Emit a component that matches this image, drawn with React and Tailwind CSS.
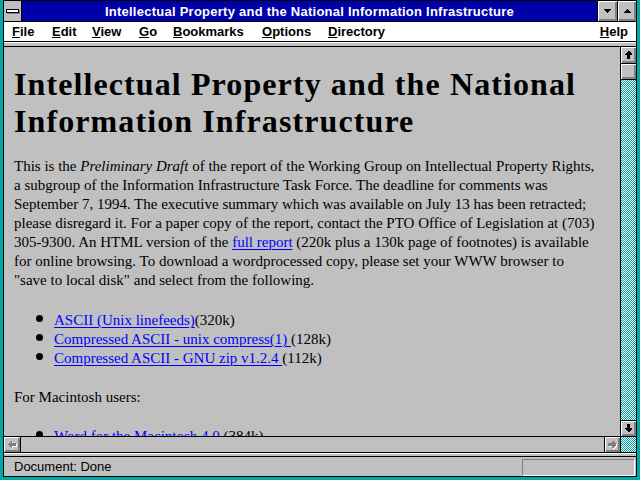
const face =
  'bg-[#c0c0c0] shadow-[inset_1px_1px_0_#ffffff,inset_-1px_-1px_0_#808080,inset_-2px_-2px_0_#808080]'

const ARROWS = {
  up: '3,0 4,0 7,3 7,4 5,4 5,8 2,8 2,4 0,4 0,3',
  down: '2,0 5,0 5,4 7,4 7,5 4,8 3,8 0,5 0,4 2,4',
  left: '0,3 0,4 3,7 4,7 4,5 8,5 8,2 4,2 4,0 3,0',
  right: '0,2 4,2 4,0 5,0 8,3 8,4 5,7 4,7 4,5 0,5',
}

function Arrow({ dir, disabled }) {
  const vertical = dir === 'up' || dir === 'down'
  const w = vertical ? 7 : 8
  const h = vertical ? 8 : 7
  return (
    <svg width={w + 1} height={h + 1} viewBox={`0 0 ${w + 1} ${h + 1}`} shapeRendering="crispEdges">
      {disabled && <polygon points={ARROWS[dir]} fill="#ffffff" transform="translate(1 1)" />}
      <polygon points={ARROWS[dir]} fill={disabled ? '#808080' : '#000000'} />
    </svg>
  )
}

function Tri({ up }) {
  return (
    <svg width="7" height="4" viewBox="0 0 7 4" shapeRendering="crispEdges">
      <polygon points={up ? '3,0 4,0 7,4 0,4' : '0,0 7,0 4,4 3,4'} fill="#000" />
    </svg>
  )
}

// dithered scrollbar track, 1px checker of teal and white
function Dither({ id, className }) {
  return (
    <svg className={className} shapeRendering="crispEdges">
      <defs>
        <pattern id={id} width="2" height="2" patternUnits="userSpaceOnUse">
          <rect width="2" height="2" fill="#ffffff" />
          <rect x="0" y="0" width="1" height="1" fill="#00a8a8" />
          <rect x="1" y="1" width="1" height="1" fill="#00a8a8" />
        </pattern>
      </defs>
      <rect width="100%" height="100%" fill={`url(#${id})`} />
    </svg>
  )
}

const MENU = [
  ['F', 'ile', 'w-[40px]'],
  ['E', 'dit', 'w-[40px]'],
  ['V', 'iew', 'w-[47px]'],
  ['G', 'o', 'w-[34px]'],
  ['B', 'ookmarks', 'w-[89px]'],
  ['O', 'ptions', 'w-[66px]'],
  ['D', 'irectory', 'w-[80px]'],
]

function Link({ children }) {
  return <a className="text-[#0000ff] underline underline-offset-[2px] decoration-[1px]">{children}</a>
}

function Bullet() {
  return <span className="mt-[4px] mr-[11px] w-[7px] h-[7px] rounded-full bg-black shrink-0" />
}

export default function App() {
  return (
    <div className="w-[640px] h-[480px] bg-[#00a8a8] px-[3px] pb-[3px] flex flex-col overflow-hidden font-['Liberation_Sans',Arial,sans-serif]">
      <div className="flex-1 min-h-0 border border-black flex flex-col bg-[#c0c0c0]">
        {/* title bar */}
        <div className="h-[21px] shrink-0 flex border-b border-black">
          <div className="w-[18px] border-r border-black bg-[#c0c0c0] flex items-center justify-center">
            <div className="w-[13px] h-[4px] bg-white border border-black shadow-[1px_1px_0_#808080]" />
          </div>
          <div className="flex-1 bg-[#0000a8] text-white font-bold text-[13px] tracking-[0.25px] leading-[20px] pt-[1px] text-center whitespace-nowrap">
            Intellectual Property and the National Information Infrastructure
          </div>
          <div className={`w-[20px] border-l border-black flex items-center justify-center ${face}`}>
            <Tri />
          </div>
          <div className={`w-[19px] border-l border-black flex items-center justify-center ${face}`}>
            <Tri up />
          </div>
        </div>

        {/* menu bar */}
        <div className="h-[20px] shrink-0 bg-white border-b border-black flex pl-[8px] pr-[8px] text-[13px] font-bold leading-[17px] pt-[1px] text-black">
          {MENU.map(([k, rest, w]) => (
            <span key={k + rest} className={`${w} shrink-0`}>
              <u>{k}</u>
              {rest}
            </span>
          ))}
          <span className="ml-auto">
            <u>H</u>elp
          </span>
        </div>

        {/* collapsed toolbar strip */}
        <div className="h-[5px] shrink-0 border-b border-black border-t border-t-white bg-[#c0c0c0]" />

        {/* document + vertical scrollbar */}
        <div className="flex-1 min-h-0 flex">
          <div className="flex-1 min-w-0 overflow-hidden pl-[10px] font-['Liberation_Serif','Times_New_Roman',serif] text-black">
            <h1 className="mt-[19px] text-[32px] leading-[37px] font-bold tracking-[1.1px] whitespace-nowrap">
              Intellectual Property and the National
              <br />
              Information Infrastructure
            </h1>
            <p className="mt-[17px] text-[15px] leading-[19px] whitespace-nowrap">
              This is the <i>Preliminary Draft</i> of the report of the Working Group on Intellectual Property Rights,
              <br />
              a subgroup of the Information Infrastructure Task Force. The deadline for comments was
              <br />
              September 7, 1994. The executive summary which was available on July 13 has been retracted;
              <br />
              please disregard it. For a paper copy of the report, contact the PTO Office of Legislation at (703)
              <br />
              305-9300. An HTML version of the <Link>full report</Link> (220k plus a 130k page of footnotes) is available
              <br />
              for online browsing. To download a wordprocessed copy, please set your WWW browser to
              <br />
              "save to local disk" and select from the following.
            </p>
            <ul className="mt-[21px] pl-[22px] text-[15px] leading-[19px] whitespace-nowrap">
              <li className="flex items-start">
                <Bullet />
                <span>
                  <Link>ASCII (Unix linefeeds)</Link>(320k)
                </span>
              </li>
              <li className="flex items-start">
                <Bullet />
                <span>
                  <Link>Compressed ASCII - unix compress(1) </Link>(128k)
                </span>
              </li>
              <li className="flex items-start">
                <Bullet />
                <span>
                  <Link>Compressed ASCII - GNU zip v1.2.4 </Link>(112k)
                </span>
              </li>
            </ul>
            <p className="mt-[20px] text-[15px] leading-[19px]">For Macintosh users:</p>
            <ul className="mt-[20px] pl-[22px] text-[15px] leading-[19px] whitespace-nowrap">
              <li className="flex items-start">
                <Bullet />
                <span>
                  <Link>Word for the Macintosh 4.0 </Link>(384k)
                </span>
              </li>
            </ul>
          </div>

          <div className="w-[16px] shrink-0 border-l border-black flex flex-col">
            <div className={`h-[17px] shrink-0 border-b border-black flex items-center justify-center ${face}`}>
              <Arrow dir="up" />
            </div>
            <div className={`h-[16px] shrink-0 border-b border-black ${face}`} />
            <Dither id="vtrack" className="flex-1 w-full block" />
            <div className={`h-[16px] shrink-0 border-t border-black flex items-center justify-center ${face}`}>
              <Arrow dir="down" />
            </div>
          </div>
        </div>

        {/* horizontal scrollbar */}
        <div className="h-[16px] shrink-0 border-t border-black flex">
          <div className={`w-[17px] shrink-0 border-r border-black flex items-center justify-center ${face}`}>
            <Arrow dir="left" disabled />
          </div>
          <div className="flex-1 bg-[#c0c0c0]" />
          <div className={`w-[16px] shrink-0 border-l border-black flex items-center justify-center ${face}`}>
            <Arrow dir="right" disabled />
          </div>
          <div className="w-[16px] shrink-0 border-l border-black flex">
            <Dither id="corner" className="flex-1 h-full block" />
          </div>
        </div>

        {/* strip */}
        <div className="h-[5px] shrink-0 border-t border-black border-b border-b-black bg-[#c0c0c0] shadow-[inset_0_1px_0_#ffffff]" />

        {/* status bar */}
        <div className="h-[19px] shrink-0 flex items-start justify-between pt-[2px] bg-[#c0c0c0]">
          <span className="pl-[10px] text-[13px] leading-[15px] text-black">Document: Done</span>
          <div className="w-[113px] h-[17px] mr-[1px] border border-t-[#808080] border-l-[#808080] border-b-white border-r-white" />
        </div>
      </div>
    </div>
  )
}
